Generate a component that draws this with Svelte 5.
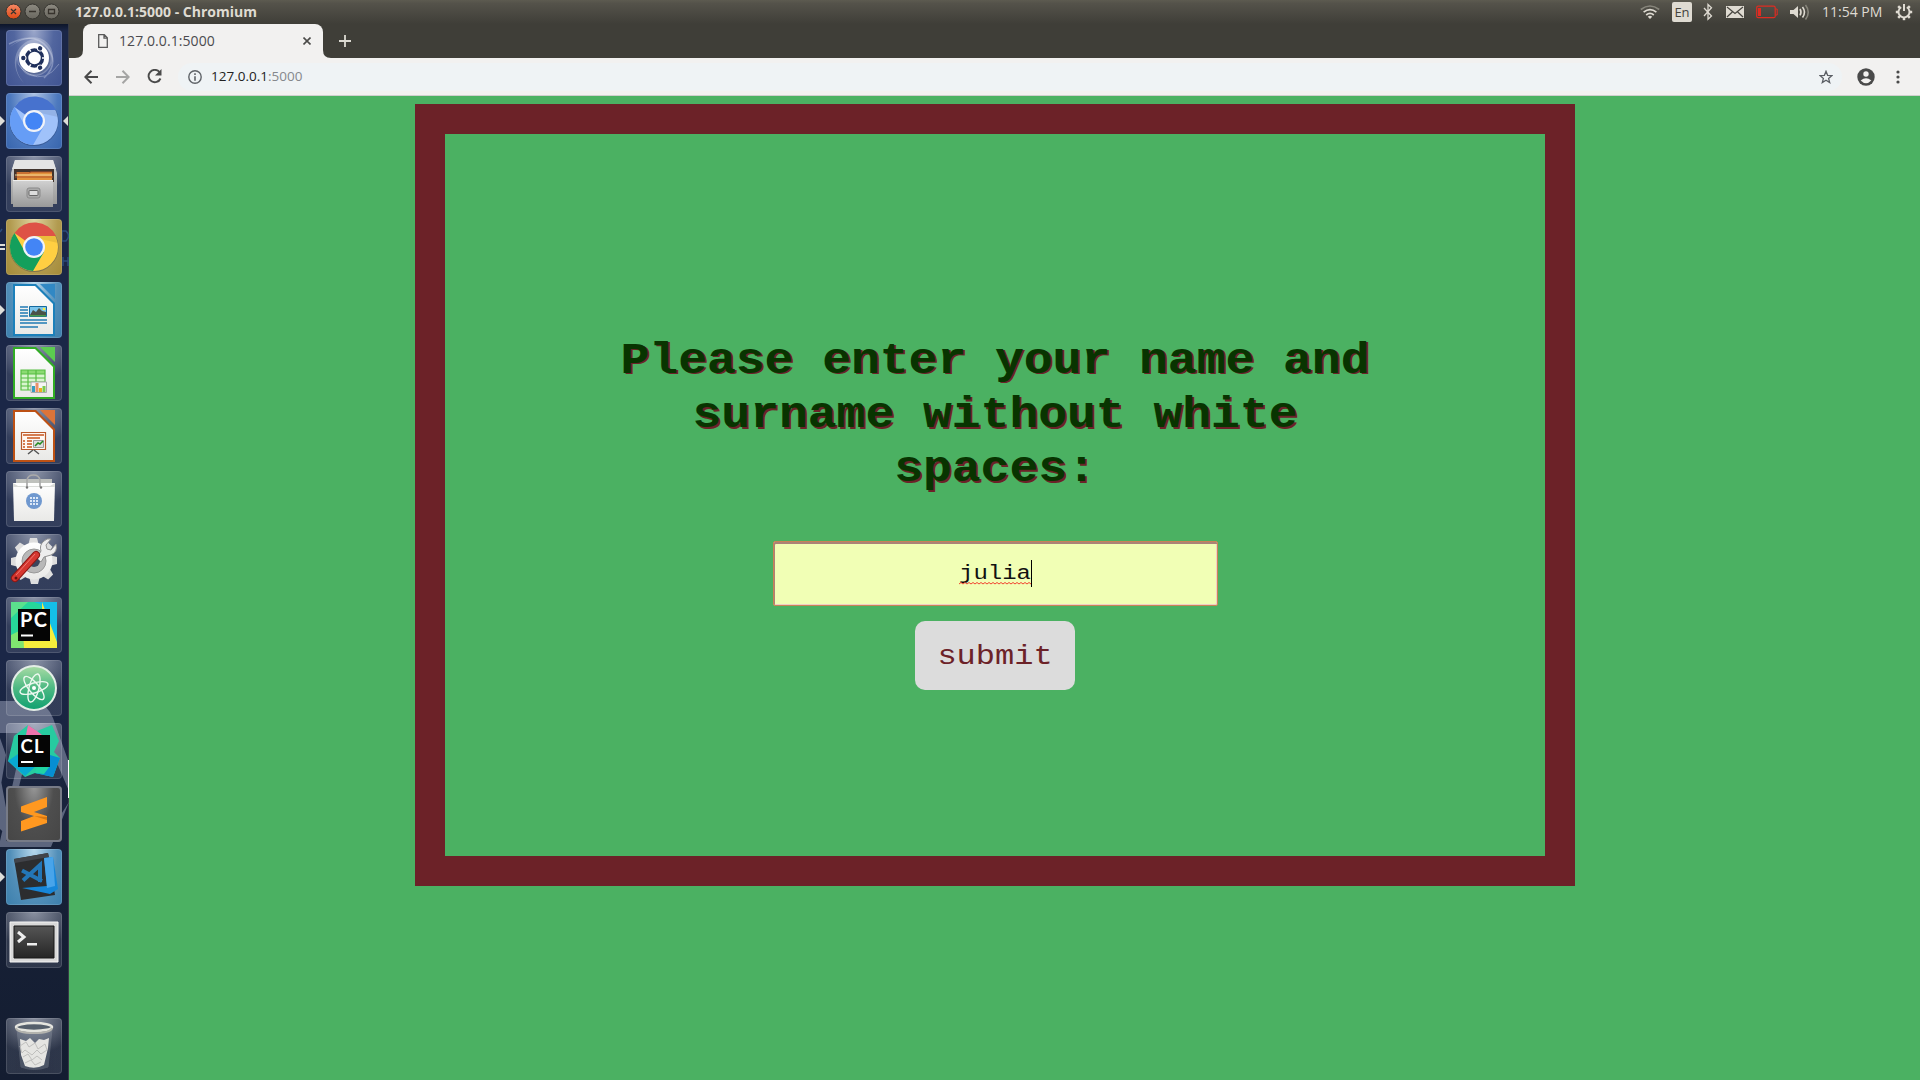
<script>
  const launchers = [
    { id: 'dash', tone: 'indigo' },
    { id: 'chromium', tone: 'blue', left: 'arrow', right: true },
    { id: 'files', tone: 'clear' },
    { id: 'chrome', tone: 'gold', left: 'double' },
    { id: 'writer', tone: 'sky', left: 'arrow' },
    { id: 'calc', tone: 'clear' },
    { id: 'impress', tone: 'clear' },
    { id: 'software', tone: 'clear' },
    { id: 'settings', tone: 'clear' },
    { id: 'pycharm', tone: 'clear' },
    { id: 'atom', tone: 'clear' },
    { id: 'clion', tone: 'clear' },
    { id: 'sublime', tone: 'grey' },
    { id: 'vscode', tone: 'sky', left: 'arrow' },
    { id: 'terminal', tone: 'clear' },
    { id: 'trash', tone: 'clear' }
  ];
  const teeth = [0, 45, 90, 135, 180, 225, 270, 315];
</script>

{#snippet documentShape(color, light)}
  <path d="M7 2h23l19 19v33H7z" fill={color} />
  <path d="M9 4h20l18 18v30H9z" fill="url(#paper)" />
  <path d="M34 2h15v15z" fill={light} />
{/snippet}

<div class="screen">
  <header class="panel">
    <div class="window-buttons">
      <svg width="62" height="24" viewBox="0 0 62 24">
        <circle cx="13.5" cy="11.5" r="7.5" fill="url(#orange)" stroke="#35342f" />
        <circle cx="32.5" cy="11.5" r="7.5" fill="url(#buttonGrey)" stroke="#35342f" />
        <circle cx="51.5" cy="11.5" r="7.5" fill="url(#buttonGrey)" stroke="#35342f" />
        <path d="M11 9l5 5M16 9l-5 5M29 11.5h7M48.5 9.5h6v4h-6z" fill="none" stroke="#37332d" stroke-width="1.3" />
      </svg>
    </div>
    <span class="title">127.0.0.1:5000 - Chromium</span>
    <div class="indicators">
      <svg class="wifi" width="20" height="24" viewBox="0 0 20 24" fill="none" stroke-width="1.7">
        <path d="M.8 9.5Q10 2.5 19.2 9.5" stroke="#87857b" />
        <path d="M3.6 12.2Q10 7 16.4 12.2M6.2 15Q10 11.8 13.8 15" stroke="#dfdbd2" />
        <path d="M7.8 16.7Q10 15 12.2 16.7L10 19z" fill="#dfdbd2" />
      </svg>
      <span class="lang">En</span>
      <svg class="bt" width="10" height="24" viewBox="0 0 10 24" fill="none" stroke="#dfdbd2" stroke-width="1.3">
        <path d="M1 8l7.5 8L5 19.2V4.5l3.5 3.2L1 16" />
      </svg>
      <svg class="mail" width="18" height="24" viewBox="0 0 18 24">
        <path fill="#dfdbd2" d="M0 6h18v12H0z" />
        <path d="M1 7l8 6.5L17 7M1 17l5.3-5M17 17l-5.3-5" fill="none" stroke="#47453f" stroke-width="1.2" />
      </svg>
      <svg class="battery" width="22" height="24" viewBox="0 0 22 24">
        <rect x=".7" y="6.2" width="18.5" height="11.5" rx="1.5" fill="none" stroke="#df2c22" stroke-width="1.2" />
        <path d="M2 8h3v8H2z" fill="#df2c22" />
        <path d="M19.5 9h1.7v6h-1.7" fill="none" stroke="#df2c22" />
      </svg>
      <svg class="volume" width="20" height="24" viewBox="0 0 20 24" fill="none" stroke-width="1.6">
        <path d="M0 10h3.5L8 6v12l-4.500-4H0z" fill="#dfdbd2" />
        <path d="M10 9q2 3.200 0 6.400M12.500 7q4 5.200 0 10.400" stroke="#dfdbd2" />
        <path d="M15.500 5q5.500 7.200 0 14.400" stroke="#87857b" />
      </svg>
      <span class="clock">11:54 PM</span>
      <svg class="power" width="18" height="24" viewBox="0 0 18 24" stroke="#dfdbd2">
        {#each teeth.slice(1) as angle}
          <path d="M9 3.800v3" stroke-width="2.500" transform="rotate({angle} 9 12)" />
        {/each}
        <path d="M6.200 7.200a5.500 5.500 0 1 0 5.600 0" fill="none" stroke-width="1.900" />
        <path d="M9 4v7" stroke-width="2" />
      </svg>
    </div>
  </header>

  <div class="desktop">
    <nav class="launcher">
      <svg class="wallpaper" width="69" height="1056" viewBox="0 24 69 1056">
        <path d="M0 701h35q12 3 18 17l16 45v28L44 733H0zM0 738l6 17-6 36zM69 802l-18 45H0v-6h44zM0 775l12 65-12-11zM35 720L6 841H0l27-121z" fill="#8b93ab" opacity=".6" />
        <path d="M62 231h4q5 5 0 10h-4zM63 257v9M68 257v9M63 261h5M0 232l2-3" fill="none" stroke="#2c4c7c" stroke-width="1.500" />
        <path d="M68.500 760v38" stroke="#fff" stroke-width="1" />
      </svg>
      {#each launchers as item}
        <div class="slot {item.id}">
          {#if item.left === 'arrow'}
            <svg class="mark-left" width="5" height="10" viewBox="0 0 5 10"><path d="M0 0l5 5-5 5z" fill="#deded9" /></svg>
          {:else if item.left === 'double'}
            <svg class="mark-left" width="5" height="10" viewBox="0 0 5 10"><path d="M0 2h5v2H0zM0 6h5v2H0z" fill="#deded9" /></svg>
          {/if}
          <div class="tile {item.tone}">
            <svg width="56" height="56" viewBox="0 0 56 56">
              {#if item.id === 'dash'}
                <g fill="none" stroke="#cbd3ea" opacity=".4">
                  <path d="M3 14Q28 1 41 17t-3 31" stroke-width="1.500" />
                  <path d="M53 34Q40 53 23 44T14 22" />
                </g>
                <path d="M3 18C22 0 47 6 47 27c0 14-15 23-25 18C12 40 12 26 17 19 9 28 7 40 18 53 2 37 8 12 29 9 19 8 10 12 3 18z" fill="#fff" opacity=".25" />
                <circle cx="29" cy="29" r="15.500" fill="#20305f" opacity=".35" />
                <circle cx="28" cy="28" r="15" fill="#fff" />
                <circle cx="28.500" cy="28" r="8" fill="none" stroke="#20305c" stroke-width="3.500" />
                {#each [0, 120, 240] as angle}
                  <g transform="rotate({angle} 28.500 28)">
                    <path d="M36 28h5" stroke="#fff" stroke-width="1.500" />
                    <circle cx="17.500" cy="28" r="3" fill="#fff" />
                    <circle cx="17.300" cy="28" r="2.200" fill="#20305c" />
                  </g>
                {/each}
              {:else if item.id === 'chromium' || item.id === 'chrome'}
                {@const blue = item.id === 'chromium'}
                <circle cx="28" cy="28.500" r="24.500" fill="#18264b" opacity=".3" />
                <circle cx="28" cy="28" r="24" fill={blue ? '#a0c2fa' : '#ffcf42'} />
                <path d="M28 28L8.500 14A24 24 0 0 1 50 17H28z" fill={blue ? '#4772ce' : '#de5246'} />
                <path d="M8.500 14A24 24 0 0 0 27 52l11-19-19 0z" fill={blue ? '#669df6' : '#149f5c'} />
                <path d="M28 17h22q2 4 2 7L34 20z" fill="#000" opacity=".08" />
                <circle cx="28" cy="28" r="11" fill="#f1f3f8" />
                <circle cx="28" cy="28" r="8.800" fill="#4385f5" />
              {:else if item.id === 'files'}
                <path d="M9 4h38l4 13v31H5V17z" fill="url(#metal)" />
                <path d="M9 4h38l3 9H6z" fill="#e4e4e4" />
                <path d="M8 13h40v13H8z" fill="#41342d" />
                <path d="M11 16h35v8H11z" fill="#e0913a" />
                <path d="M10 17h13l2-1h21M9 21h38" fill="none" stroke="#b0502b" stroke-width="1.200" />
                <path d="M9 19h37" stroke="#f5d79c" />
                <path d="M7 24h40v27H7z" fill="url(#metal)" />
                <path d="M7 24.500h40" stroke="#eee" />
                <rect x="21" y="32" width="13" height="10" rx="2" fill="#aaa" stroke="#898989" />
                <rect x="23" y="34.500" width="9" height="5" rx="1" fill="#ddd" stroke="#666" />
              {:else if item.id === 'writer'}
                {@render documentShape('#1c80ba', '#3188c4')}
                <path d="M14 25h8M14 28h8M14 31h8M14 34h8M14 38h27M14 41h27M14 45h18" stroke="#217bb4" stroke-width="1.500" />
                <path d="M23.500 24.500h17v10h-17z" fill="#7bc5eb" stroke="#146a9e" />
                <path d="M24 33l3-5 3 2 3-4 3 3 4 1v4H24z" fill="#495348" />
                <path d="M24 33h16v1.500H24z" fill="#489848" />
                <circle cx="38" cy="27" r="1.300" fill="#fbee3d" />
              {:else if item.id === 'calc'}
                {@render documentShape('#31ad24', '#5ccc50')}
                <path d="M15 25h24v20H15z" fill="#d9f5ce" />
                <path d="M15 25h24v4H15z" fill="#8bda72" />
                <path d="M15 25h24v20H15zM15 29h24M15 33h24M15 37h24M15 41h24M22 25v20M30 25v20" fill="none" stroke="#57bd42" stroke-width="1.200" />
                <path d="M25 37h15.500v10.500H25z" fill="#f5f5f5" stroke="#aaa" />
                <path d="M26 41h3v6h-3z" fill="#379dc0" /><path d="M29.500 38h3v9h-3z" fill="#eb916a" />
                <path d="M33 43h3v4h-3z" fill="#ebb01c" /><path d="M36.500 41h3v6h-3z" fill="#7acb4e" />
              {:else if item.id === 'impress'}
                {@render documentShape('#bd5114', '#dc7439')}
                <path d="M15.500 24.500h24v17h-24z" fill="#fff8f3" stroke="#b95a2b" stroke-width="1.200" />
                <path d="M17 27h21M21 30h13M17 33h2M21 33h5M17 36h2M21 36h5M17 39h2M21 39h5" stroke="#c8541d" stroke-width="1.600" />
                <path d="M27.500 32.500h10v7h-10z" fill="#ddd" stroke="#999" />
                <path d="M29 38l3-3 2 1 3-3" fill="none" stroke="#248b21" stroke-width="1.500" />
                <path d="M27 42l-5 4M28 42l5 4" stroke="#555" stroke-width="1.500" />
              {:else if item.id === 'software'}
                <path d="M10 8h36v5H10z" fill="#bfc1bd" />
                <path d="M7 12h42l-1 38H8z" fill="url(#paper)" />
                <path d="M7 12l5 3h32l5-3v4H7z" fill="#dadcd9" />
                <path d="M21 16V9q1-5 6.500-5T34 9v7" fill="none" stroke="#aaa" stroke-width="1.700" />
                <circle cx="21" cy="16.500" r="1.200" fill="#777" /><circle cx="35" cy="16.500" r="1.200" fill="#777" />
                <circle cx="28" cy="30" r="8" fill="#6f98cf" />
                <path d="M24 27h8M24 30h8M24 33h8" stroke="#dce8f7" stroke-width="2" stroke-dasharray="2 1" />
              {:else if item.id === 'settings'}
                <g fill="#dedede">
                  {#each teeth as angle}
                    <path d="M24 4h7l2 8H22z" transform="rotate({angle} 28 27)" />
                  {/each}
                </g>
                <circle cx="28" cy="27" r="18.500" fill="url(#paper)" />
                <circle cx="28" cy="27" r="12" fill="#b8b8b8" stroke="#999" />
                <circle cx="28" cy="27" r="6" fill="#3b455c" />
                <path d="M31 24l4-7q-2-6 3-10 3-3 7-2l-5 6 1 4 4 1 5-6q2 8-5 11l-7 2-3 5z" fill="#eee" stroke="#919191" />
                <path d="M9 44L30 21" stroke="#8d1713" stroke-width="8" stroke-linecap="round" />
                <path d="M9 44L30 21" stroke="#d63730" stroke-width="6" stroke-linecap="round" />
                <path d="M10 41L29 20" stroke="#ef7870" stroke-width="1" />
                <circle cx="10" cy="44" r="1.500" fill="#651310" />
              {:else if item.id === 'pycharm'}
                <path d="M5 5h46v46H5z" fill="#27d69a" />
                <path d="M28 5h23v46L34 7z" fill="#14bfe8" />
                <path d="M5 21L22 5H5z" fill="#5be18d" />
                <path d="M36 5l15 40v6H17l-2-8 21-20z" fill="#f5ed3c" />
                <path d="M5 51V38l12-6 1 19z" fill="#7fe570" />
                <path d="M12 12h32v32H12z" fill="#050505" />
                <text x="14" y="30" class="badge" textLength="27">PC</text>
                <path d="M15 37.500h12v2H15z" fill="#fff" />
              {:else if item.id === 'atom'}
                <circle cx="28" cy="28" r="22" fill="url(#atomGreen)" stroke="#e4eee7" stroke-width="2" />
                <g fill="none" stroke="#ecf8ef" stroke-width="1.400">
                  <ellipse cx="28" cy="28" rx="14.500" ry="5" transform="rotate(-17 28 28)" />
                  <ellipse cx="28" cy="28" rx="14.500" ry="5" transform="rotate(50 28 28)" />
                  <ellipse cx="28" cy="28" rx="14.500" ry="5" transform="rotate(105 28 28)" />
                </g>
                <circle cx="28" cy="28" r="2" fill="#fff" />
              {:else if item.id === 'clion'}
                <path d="M8 13L22 2l9 6 15-6 7 16-5 11 6 6-7 19-18-4-10 4L2 38z" fill="#27cba0" />
                <path d="M22 2l9 6 5 4H20z" fill="#ee72ac" />
                <path d="M2 38l10-7v12h18l-11 10z" fill="#08a9d2" />
                <path d="M44 32l10 3-7 19-18-4 15-7z" fill="#078ed3" />
                <path d="M31 43h13l-6 8-9-1z" fill="#21d4a3" />
                <path d="M12 12h32v32H12z" fill="#050505" />
                <text x="14.500" y="30" class="badge small" textLength="23">CL</text>
                <path d="M15 38h12v2H15z" fill="#fff" />
              {:else if item.id === 'sublime'}
                <path d="M15 20.500L41 11v10l-13 5 13 4v7l-26 8.500V35l13-5-13-4z" fill="#ff9820" />
                <path d="M28 30l13 1v3z" fill="#d87812" />
              {:else if item.id === 'vscode'}
                <path d="M8 10l34-6 7 42-34 5z" fill="#2c2d2f" />
                <path d="M8 10l34-6 1 4-34 6z" fill="#414349" />
                <path d="M16 21.500l20 10.500M17 31.500L34 16v17" fill="none" stroke="#2376b7" stroke-width="4" />
                <path d="M38 9l9-1 5 32-8 5-28-6 25-2z" fill="#1686d9" />
                <path d="M38 9l9-1 2 29-8 2z" fill="#48a4ea" />
              {:else if item.id === 'terminal'}
                <path d="M4 10h48v40H4z" fill="#d9d9d9" stroke="#f5f5f5" />
                <path d="M8 14h40v32H8z" fill="url(#terminalFace)" stroke="#191919" />
                <path d="M12 20l6 5-6 5" fill="none" stroke="#eee" stroke-width="3" />
                <path d="M21 31h10v2.500H21z" fill="#eee" />
              {:else if item.id === 'trash'}
                <path d="M11 11h35l-4 38q-14 5-27 0z" fill="#c2cbd5" opacity=".2" stroke="#cbd0d5" />
                <path d="M14 21l6 2 4-3 5 5 4-4 5 1 5-2-1 10-4 17q-9 5-19 1l-4-11z" fill="#e5e5e2" />
                <path d="M14 28l6-4 3 5 6-4 3 6 7-5 2 6-6 4-4-4-5 5-7-5-3 3zM17 39l5-3 4 6 5-4 5 4M19 45l6-3 4 5 6-3" fill="none" stroke="#bfbfbd" stroke-width="1" />
                <ellipse cx="28" cy="9" rx="18" ry="4" fill="#555f6b" stroke="#e5e5df" stroke-width="2.500" />
                <path d="M10 10q1 5 18 5t18-5" fill="none" stroke="#b3b3ae" stroke-width="2" />
              {/if}
            </svg>
          </div>
          {#if item.right}
            <svg class="mark-right" width="5" height="10" viewBox="0 0 5 10"><path d="M5 0L0 5l5 5z" fill="#deded9" /></svg>
          {/if}
        </div>
      {/each}
    </nav>

    <section class="browser">
      <div class="tabs">
        <svg class="flare" width="8" height="8" viewBox="0 0 8 8"><path d="M8 0v8H0q8 0 8-8z" fill="#f2f1f0" /></svg>
        <div class="tab">
          <svg width="10" height="14" viewBox="0 0 10 14"><path d="M.7.700h5.600l3 3v9.600H.700zM6 .700v3.500h3.300" fill="none" stroke="#5a5a5a" stroke-width="1.300" /></svg>
          <span>127.0.0.1:5000</span>
          <svg class="close" width="8" height="8" viewBox="0 0 8 8"><path d="M.5.500l7 7M7.500.500l-7 7" stroke="#4b4b49" stroke-width="1.600" /></svg>
        </div>
        <svg class="flare" width="8" height="8" viewBox="0 0 8 8"><path d="M0 0v8h8Q0 8 0 0z" fill="#f2f1f0" /></svg>
        <svg class="new-tab" width="12" height="12" viewBox="0 0 12 12"><path d="M6 0v12M0 6h12" stroke="#dcdad2" stroke-width="1.800" /></svg>
      </div>
      <div class="toolbar">
        <svg class="back" width="14" height="14" viewBox="0 0 14 14" fill="none" stroke="#4a4a4a" stroke-width="2"><path d="M14 7H1.500M7.500 .700L1.300 7l6.200 6.300" /></svg>
        <svg class="forward" width="14" height="14" viewBox="0 0 14 14" fill="none" stroke="#a5a5a4" stroke-width="2"><path d="M0 7h12.500M6.500.700L12.700 7l-6.200 6.300" /></svg>
        <svg class="reload" width="15" height="15" viewBox="0 0 15 15"><path d="M12.500 3A6.200 6.200 0 1 0 13.500 9.500" fill="none" stroke="#4a4a4a" stroke-width="1.900" /><path d="M14.500 0v6.500H8z" fill="#4a4a4a" /></svg>
        <div class="omnibox">
          <svg width="14" height="14" viewBox="0 0 14 14"><circle cx="7" cy="7" r="6.200" fill="none" stroke="#5f6368" stroke-width="1.400" /><path d="M6.200 3.300h1.600v1.600H6.200zM6.200 6.200h1.600v4.500H6.200z" fill="#5f6368" /></svg>
          <span class="url">127.0.0.1<span class="port">:5000</span></span>
          <svg class="star" width="14" height="14" viewBox="0 0 14 14"><path d="M7 1.300l1.600 4 4.400.300-3.400 2.800 1.100 4.200L7 10.300l-3.700 2.300 1.100-4.200L1 5.600l4.400-.300z" fill="none" stroke="#5b5f65" stroke-width="1.300" /></svg>
        </div>
        <svg class="user" width="18" height="18" viewBox="0 0 18 18"><circle cx="9" cy="9" r="8.700" fill="#4a4a4a" /><circle cx="9" cy="6" r="2.700" fill="#f2f1f0" /><path d="M3.700 12.500q5.300-4.500 10.600 0Q9 18 3.700 12.500z" fill="#f2f1f0" /></svg>
        <svg class="more" width="4" height="14" viewBox="0 0 4 14" fill="#4a4a4a"><circle cx="2" cy="2" r="1.600" /><circle cx="2" cy="7" r="1.600" /><circle cx="2" cy="12" r="1.600" /></svg>
      </div>

      <main>
        <form class="frame">
          <h1>Please enter your name and surname without white spaces:</h1>
          <div class="field">
            <div class="entry"><span class="squat">julia</span><svg class="squiggle" width="72" height="3" viewBox="0 0 72 3"><path d={'M0 2' + 'l2-1.500 2 1.500'.repeat(18)} fill="none" stroke="#f0432f" /></svg><i class="caret"></i></div>
          </div>
          <button type="button"><span class="squat">submit</span></button>
        </form>
      </main>
    </section>
  </div>

  <svg class="defs" width="0" height="0">
    <defs>
      <linearGradient id="orange" x2="0" y2="1"><stop stop-color="#f68a66" /><stop offset="1" stop-color="#dd4814" /></linearGradient>
      <linearGradient id="buttonGrey" x2="0" y2="1"><stop stop-color="#8d8a81" /><stop offset="1" stop-color="#69675f" /></linearGradient>
      <linearGradient id="paper" x2="0" y2="1"><stop stop-color="#fff" /><stop offset="1" stop-color="#e9e9e7" /></linearGradient>
      <linearGradient id="metal" x2="0" y2="1"><stop stop-color="#d2d2d2" /><stop offset="1" stop-color="#999" /></linearGradient>
      <linearGradient id="atomGreen" x2="0" y2="1"><stop stop-color="#a9dca5" /><stop offset=".5" stop-color="#4db983" /><stop offset="1" stop-color="#0fa070" /></linearGradient>
      <linearGradient id="terminalFace" x2="0" y2="1"><stop stop-color="#555" /><stop offset="1" stop-color="#252525" /></linearGradient>
    </defs>
  </svg>
</div>

<style>
  :global(body) { margin: 0; overflow: hidden; }
  svg { display: block; flex: none; }
  .screen { width: 1920px; height: 1080px; display: flex; flex-direction: column; overflow: hidden; font-family: "Open Sans", "Noto Sans", sans-serif; }
  .defs { position: absolute; }
  .panel { height: 24px; flex: none; display: flex; align-items: center; background: linear-gradient(#5d5b50 0, #54524a 15%, #3f3e38 100%); color: #dfdbd2; }
  .window-buttons { width: 75px; }
  .title { font-size: 14px; font-weight: 700; line-height: 24px; white-space: nowrap; }
  .indicators { margin-left: auto; display: flex; align-items: center; padding-right: 7px; }
  .lang { width: 20px; height: 20px; margin-left: 12px; border-radius: 2px; background: #dfdbd2; color: #45433d; font-size: 13px; line-height: 20px; text-align: center; }
  .bt { margin-left: 11px; }
  .mail { margin-left: 13px; }
  .battery { margin-left: 12px; }
  .volume { margin-left: 12px; }
  .clock { width: 61px; margin-left: 12px; font-size: 14px; letter-spacing: 0; line-height: 24px; white-space: nowrap; }
  .power { margin-left: 12px; }

  .desktop { display: flex; height: 1056px; }
  .launcher { position: relative; width: 69px; box-sizing: border-box; flex: none; display: flex; flex-direction: column; gap: 7px; padding-top: 6px; background: linear-gradient(#0d1529 0, #1b2747 7px, #1b2747 60%, #172137 80%, #141d31); border-right: 1px solid #363a45; }
  .wallpaper { position: absolute; left: 0; top: 0; }
  .slot { position: relative; height: 56px; padding-left: 6px; flex: none; }
  .trash { margin-top: 43px; }
  .tile { width: 56px; height: 56px; border-radius: 4px; position: relative; overflow: hidden; box-shadow: inset 0 0 0 1px rgba(255,255,255,.13); }
  .tile > svg { position: relative; }
  .clear { background: radial-gradient(ellipse 75% 65% at 50% 0, rgba(215,220,232,.6), rgba(190,195,210,.15)); }
  .indigo { background: radial-gradient(ellipse at 50% 0, #9ca8cb, #52669f 50%, #405492); }
  .blue { background: radial-gradient(ellipse at 50% 0, #abc2e5, #4d79be 60%, #3764ac); }
  .gold { background: radial-gradient(ellipse at 50% 0, #ded49f, #b29b50 60%, #a48b38); }
  .sky { background: radial-gradient(ellipse at 50% 0, #b7d8ed, #528fb9 60%, #3c7fac); }
  .grey { background: radial-gradient(ellipse at 50% 0, #999, #4e4e4e 50%, #454545); box-shadow: inset 0 0 0 2px #777b87; }
  .mark-left, .mark-right { position: absolute; top: 23px; }
  .mark-left { left: 0; }
  .mark-right { right: 0; }
  .badge { font: 700 20px Lato, "Open Sans", sans-serif; fill: #fff; }
  .small { font-size: 18.500px; }

  .browser { width: 1851px; flex: none; display: flex; flex-direction: column; }
  .tabs { height: 34px; display: flex; align-items: flex-end; padding-left: 6px; background: #3f3e38; }
  .tab { width: 240px; height: 34px; box-sizing: border-box; display: flex; align-items: center; padding: 0 12px 0 15px; background: #f2f1f0; border-radius: 8px 8px 0 0; color: #4b4b4f; font-size: 14px; letter-spacing: .08px; }
  .tab span { margin-left: 11px; line-height: 34px; }
  .close { margin-left: auto; }
  .new-tab { margin: 0 0 11px 8px; }
  .toolbar { height: 38px; box-sizing: border-box; display: flex; align-items: center; padding-left: 15px; background: #f2f1f0; border-bottom: 1px solid #d0d0ce; }
  .forward { margin-left: 18px; }
  .reload { margin-left: 17px; }
  .omnibox { height: 28px; flex: 1; margin-left: 16px; border-radius: 14px; background: #eff3f5; display: flex; align-items: center; padding: 0 9px 0 10px; }
  .url { margin-left: 9px; padding-bottom: 2px; color: #222; font-size: 13.500px; line-height: 26px; }
  .port { color: #85888c; }
  .star { margin-left: auto; }
  .user { margin-left: 15px; }
  .more { margin: 0 20px 0 21px; }

  main { flex: 1; background: #4bb162; padding-top: 8px; font-family: "Courier New", "Liberation Mono", monospace; }
  .frame { width: 1100px; height: 722px; border: 30px solid #6c2228; margin-left: 346px; display: flex; flex-direction: column; align-items: center; }
  h1 { width: 770px; height: 177px; margin: 200px 0 -14px; text-align: center; font-size: 48px; line-height: 59px; font-weight: 700; color: #083400; text-shadow: 2px 2px #6c2228; transform: scaleY(.92); transform-origin: top; }
  .squat { display: block; transform: scaleY(.88); }
  .field { width: 445px; height: 65px; box-sizing: border-box; margin-top: 44px; border: 1px solid #c98355; border-radius: 2px; background: #f1ffb5; display: flex; align-items: center; justify-content: center; box-shadow: inset 1px 2px #ab8377, inset -1px -1px #f0cfc4; font-size: 24px; color: #111; }
  .entry { position: relative; line-height: 27px; }
  .squiggle { position: absolute; left: 0; top: 22px; }
  .caret { position: absolute; right: -1px; top: 0; width: 1px; height: 27px; background: #000; }
  button { width: 160px; height: 69px; margin-top: 15px; padding: 1px 0 0; border: 0; border-radius: 10px; background: #dcdcdc; color: #6c2228; font: 32px "Courier New", "Liberation Mono", monospace; }
</style>
